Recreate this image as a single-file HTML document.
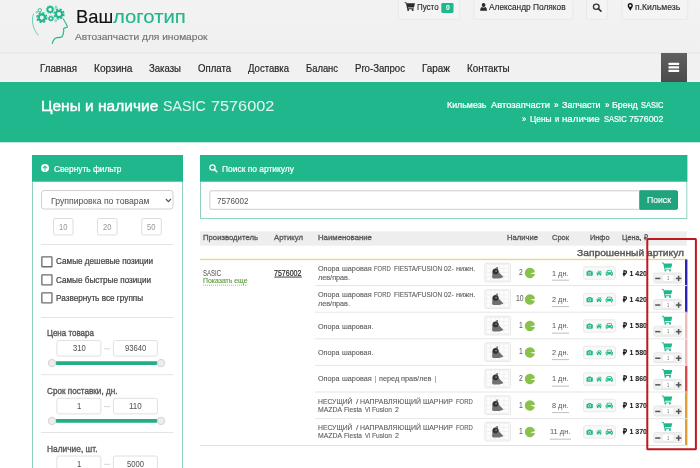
<!DOCTYPE html>
<html lang="ru"><head><meta charset="utf-8"><title>Цены и наличие SASIC 7576002</title>
<style>
html,body{margin:0;padding:0;background:#fff}
body{width:700px;height:468px;overflow:hidden;position:relative;font-family:"Liberation Sans",sans-serif}
#p{position:absolute;left:-6px;top:-6px;width:712px;height:480px;overflow:hidden;background:#fff;}
#p svg{position:absolute;left:0;top:0}
#t{position:absolute;left:6px;top:6px;width:700px;height:468px;will-change:transform}
#t span{position:absolute;line-height:0;white-space:pre;transform-origin:0 0}
</style></head><body><div id="p">
<svg width="712" height="480" viewBox="-6 -6 712 480">
<defs><linearGradient id="hg" x1="0" y1="0" x2="0" y2="1"><stop offset="0" stop-color="#f3f3f3"/><stop offset="1" stop-color="#f0f0f0"/></linearGradient><linearGradient id="bg" x1="0" y1="0" x2="0" y2="1"><stop offset="0" stop-color="#606060"/><stop offset="1" stop-color="#4a4a4a"/></linearGradient></defs>
<rect x="-6.00" y="-6.00" width="712.00" height="59.00" rx="0" fill="url(#hg)" />
<rect x="-6.00" y="53.00" width="712.00" height="29.00" rx="0" fill="#f1f1f1" />
<rect x="-6.00" y="52.30" width="712.00" height="1.40" rx="0" fill="#e7e7e7" />
<g fill="none" stroke="#21b78c"><path d="M33.6 13.6C32 17.5 32 22 33.6 27c1 3.2 2.8 6 4.8 8.4" stroke-width="0.8" opacity="0.8"/><path d="M63.3 18.6c0.6 1.6 1.4 3 2.4 4.4l1.5 3.2c0.3 0.7 0 1.1-0.7 1.3l-2.2 0.6c-0.7 0.3-0.9 0.8-0.7 1.5l0.2 1.6-0.6 1.2 0.3 1.4-0.8 1.3c-0.2 1.4-0.9 2.2-2.3 2.3l-3.4 0.2c-2.4 0.5-4 2.6-4.8 6.2" stroke-width="1.1" stroke-linejoin="round"/><circle cx="41.8" cy="17.6" r="3.2" stroke-width="2.3"/><circle cx="41.8" cy="17.6" r="4.9" stroke-width="1.5" stroke-dasharray="2.155 1.693"/><circle cx="50.1" cy="9.5" r="2.6" stroke-width="1.7"/><circle cx="50.1" cy="9.5" r="3.8" stroke-width="0.9" stroke-dasharray="1.337 1.051"/><circle cx="59" cy="14" r="3.2" stroke-width="2.3"/><circle cx="59" cy="14" r="4.9" stroke-width="1.5" stroke-dasharray="2.155 1.693"/><circle cx="50.9" cy="18.4" r="1.8" stroke-width="1.4"/><circle cx="50.9" cy="18.4" r="2.7" stroke-width="0.8" stroke-dasharray="1.188 0.933"/><circle cx="39.8" cy="10.2" r="1.7" stroke-width="0.9"/><circle cx="36.8" cy="12.3" r="0.8" stroke-width="0.6"/><circle cx="56" cy="7.2" r="1.1" stroke-width="0.6"/><circle cx="55.7" cy="20.6" r="0.9" stroke-width="0.6"/></g>
<rect x="398.30" y="-2.50" width="61.30" height="21.80" rx="1" fill="#f4f4f4" stroke="#e9e9e9" stroke-width="1" />
<rect x="473.80" y="-2.50" width="99.10" height="21.80" rx="1" fill="#f4f4f4" stroke="#e9e9e9" stroke-width="1" />
<rect x="586.50" y="-2.50" width="20.90" height="21.80" rx="1" fill="#f4f4f4" stroke="#e9e9e9" stroke-width="1" />
<rect x="622.00" y="-2.50" width="65.70" height="21.80" rx="1" fill="#f4f4f4" stroke="#e9e9e9" stroke-width="1" />
<g transform="translate(404.70 1.90) scale(0.6438 0.6571)" fill="#2a2a2a"><path d="M0 0.6h2.6l0.6 1.6H16l-1.6 6.2H5l0.3 1.4h8.6v1.4H4L2 2H0z"/><circle cx="5.4" cy="12.4" r="1.5"/><circle cx="12.4" cy="12.4" r="1.5"/></g>
<rect x="441.30" y="2.90" width="12.20" height="10.00" rx="1.3" fill="#21b78c" />
<g transform="translate(480.00 3.00) scale(0.6000 0.6417)" fill="#2a2a2a"><circle cx="6" cy="3.1" r="3.1"/><path d="M0.3 12c0-3.6 1.6-5.4 3.2-5.7 0.7 0.6 1.5 0.9 2.5 0.9s1.8-0.3 2.5-0.9c1.6 0.3 3.2 2.1 3.2 5.7z"/></g>
<g transform="translate(592.50 3.30) scale(0.7667 0.7083)" fill="#333"><circle cx="4.9" cy="4.9" r="3.7" fill="none" stroke="#333" stroke-width="1.7"/><path d="M7.4 7.4L11 11" stroke="#333" stroke-width="2.2" stroke-linecap="round"/></g>
<g transform="translate(627.70 3.10) scale(0.6375 0.6333)" fill="#111"><path fill-rule="evenodd" d="M4 0a4 4 0 0 1 4 4c0 1-0.4 1.8-0.9 2.8L4 12 0.9 6.8C0.4 5.8 0 5 0 4a4 4 0 0 1 4-4zm0 2.1a1.9 1.9 0 1 0 0 3.8 1.9 1.9 0 0 0 0-3.8z"/></g>
<rect x="661.00" y="53.00" width="26.00" height="29.00" rx="0" fill="url(#bg)" />
<rect x="668.50" y="62.80" width="10.60" height="2.10" rx="0.5" fill="#fff" />
<rect x="668.50" y="66.30" width="10.60" height="2.10" rx="0.5" fill="#fff" />
<rect x="668.50" y="69.80" width="10.60" height="2.10" rx="0.5" fill="#fff" />
<rect x="-6.00" y="82.00" width="712.00" height="60.30" rx="0" fill="#21b78c" />
<rect x="32.50" y="155.50" width="150.00" height="329.00" rx="0" fill="#fff" stroke="#8fd2c0" stroke-width="1" />
<rect x="32.00" y="155.00" width="151.00" height="26.70" rx="0" fill="#21b78c" />
<g transform="translate(41.00 164.00) scale(0.6667 0.6667)" fill="#fff"><path fill-rule="evenodd" d="M6 0a6 6 0 1 1 0 12A6 6 0 0 1 6 0zm0 2.2L2.2 6l0.9 0.9 2.2-2.1V9.8h1.4V4.8l2.2 2.1L9.8 6z"/></g>
<rect x="41.50" y="190.50" width="131.50" height="18.50" rx="2.5" fill="#fff" stroke="#d0d0d0" stroke-width="1" />
<path d="M165.9 199L168.4 201.6 170.9 199" fill="none" stroke="#505050" stroke-width="1.1"/>
<rect x="53.50" y="218.50" width="19.50" height="16.50" rx="1.5" fill="#fff" stroke="#ddd" stroke-width="1" />
<rect x="97.50" y="218.50" width="19.50" height="16.50" rx="1.5" fill="#fff" stroke="#ddd" stroke-width="1" />
<rect x="141.80" y="218.50" width="19.50" height="16.50" rx="1.5" fill="#fff" stroke="#ddd" stroke-width="1" />
<rect x="41.00" y="244.00" width="132.50" height="1.00" rx="0" fill="#e4e4e4" />
<rect x="41.85" y="256.85" width="10.10" height="9.90" rx="0.35" fill="#fff" stroke="#6c6c6c" stroke-width="1.3" />
<rect x="41.85" y="274.95" width="10.10" height="9.90" rx="0.35" fill="#fff" stroke="#6c6c6c" stroke-width="1.3" />
<rect x="41.85" y="292.95" width="10.10" height="9.90" rx="0.35" fill="#fff" stroke="#6c6c6c" stroke-width="1.3" />
<rect x="41.00" y="317.00" width="132.50" height="1.00" rx="0" fill="#e4e4e4" />
<rect x="56.90" y="340.50" width="44.00" height="15.60" rx="2" fill="#fff" stroke="#e0e0e0" stroke-width="1" />
<rect x="113.40" y="340.50" width="44.00" height="15.60" rx="2" fill="#fff" stroke="#e0e0e0" stroke-width="1" />
<rect x="104.00" y="348.30" width="6.00" height="1.00" rx="0" fill="#d6d6d6" />
<rect x="55.00" y="361.30" width="103.00" height="3.60" rx="1.8" fill="#23ae86" />
<circle cx="52" cy="363.1" r="3.7" fill="#ededed" stroke="#d4d4d4" stroke-width="1"/>
<circle cx="161" cy="363.1" r="3.7" fill="#ededed" stroke="#d4d4d4" stroke-width="1"/>
<rect x="41.00" y="374.20" width="132.50" height="1.00" rx="0" fill="#e4e4e4" />
<rect x="56.90" y="398.30" width="44.00" height="15.60" rx="2" fill="#fff" stroke="#e0e0e0" stroke-width="1" />
<rect x="113.40" y="398.30" width="44.00" height="15.60" rx="2" fill="#fff" stroke="#e0e0e0" stroke-width="1" />
<rect x="104.00" y="406.10" width="6.00" height="1.00" rx="0" fill="#d6d6d6" />
<rect x="55.00" y="419.10" width="103.00" height="3.60" rx="1.8" fill="#23ae86" />
<circle cx="52" cy="420.9" r="3.7" fill="#ededed" stroke="#d4d4d4" stroke-width="1"/>
<circle cx="161" cy="420.9" r="3.7" fill="#ededed" stroke="#d4d4d4" stroke-width="1"/>
<rect x="41.00" y="432.00" width="132.50" height="1.00" rx="0" fill="#e4e4e4" />
<rect x="56.90" y="456.00" width="44.00" height="15.60" rx="2" fill="#fff" stroke="#e0e0e0" stroke-width="1" />
<rect x="113.40" y="456.00" width="44.00" height="15.60" rx="2" fill="#fff" stroke="#e0e0e0" stroke-width="1" />
<rect x="104.00" y="463.80" width="6.00" height="1.00" rx="0" fill="#d6d6d6" />
<rect x="55.00" y="476.80" width="103.00" height="3.60" rx="1.8" fill="#23ae86" />
<circle cx="52" cy="478.6" r="3.7" fill="#ededed" stroke="#d4d4d4" stroke-width="1"/>
<circle cx="161" cy="478.6" r="3.7" fill="#ededed" stroke="#d4d4d4" stroke-width="1"/>
<rect x="200.50" y="155.50" width="486.30" height="63.00" rx="0" fill="#fff" stroke="#8fd2c0" stroke-width="1" />
<rect x="200.00" y="155.00" width="487.30" height="26.70" rx="0" fill="#21b78c" />
<g transform="translate(209.00 164.00) scale(0.7083 0.7083)" fill="#fff"><circle cx="4.9" cy="4.9" r="3.7" fill="none" stroke="#fff" stroke-width="1.7"/><path d="M7.4 7.4L11 11" stroke="#fff" stroke-width="2.2" stroke-linecap="round"/></g>
<rect x="209.80" y="190.80" width="430.00" height="18.50" rx="1" fill="#fff" stroke="#cdcdcd" stroke-width="1" />
<rect x="640.00" y="190.80" width="37.50" height="18.50" rx="1.1" fill="#1fa47e" stroke="#1c9c78" stroke-width="1" />
<rect x="639.50" y="190.30" width="3.00" height="19.50" rx="0" fill="#1fa47e" />
<rect x="200.00" y="231.30" width="486.80" height="14.40" rx="0" fill="#eeeeee" />
<rect x="200.00" y="257.60" width="487.00" height="1.40" rx="0" fill="#fffbe4" />
<rect x="200.00" y="258.95" width="487.00" height="1.15" rx="0" fill="#dbd2b4" />
<path d="M203 285.2H247.5" stroke="#86b96a" stroke-width="0.9" stroke-dasharray="1 1" fill="none"/>
<rect x="274.30" y="276.60" width="27.50" height="0.90" rx="0" fill="#2a2a2a" />
<g transform="translate(484.40 262.80)"><rect x="0.5" y="0.5" width="25.5" height="18.6" rx="1" fill="#fbfbfb" stroke="#e7e7e7"/><rect x="2" y="1.6" width="22" height="16.2" fill="#fdfdfd" stroke="#e9e9e9" stroke-width="0.5"/><path d="M2 5.6h22M2 9.7h22M2 13.8h22M6.4 1.6v16.2M10.8 1.6v16.2M15.2 1.6v16.2M19.6 1.6v16.2" stroke="#e9e9e9" stroke-width="0.6" fill="none"/><path d="M11.9 4.2h1.7v2h-1.7z" fill="#777"/><path d="M8 8.6a3.2 3.2 0 0 1 6.3-0.6l0.4 1.7 3.9 4.1c0.4 0.5 0.2 0.9-0.4 1l-3.3 0.8H9.2c-0.9 0-1.5-0.6-1.5-1.5z" fill="#707070"/><circle cx="11.1" cy="8.7" r="2.8" fill="#333"/><circle cx="11.7" cy="8.3" r="0.9" fill="#8c8c8c"/></g>
<path transform="translate(524.80 267.80) scale(1.04)" d="M5 5.2L9.9 4.2A5 5 0 1 0 9.8 6.3z" fill="#88c24b"/>
<rect x="551.75" y="279.70" width="17.30" height="0.90" rx="0" fill="#b8b8b8" />
<rect x="583.60" y="266.80" width="31.70" height="12.40" rx="1.5" fill="#f8f8f8" stroke="#eaeaea" stroke-width="1" />
<g transform="translate(586.50 270.30) scale(0.4500 0.4667)" fill="#21b78c"><path fill-rule="evenodd" d="M4.6 0.6h4.8l0.9 1.6h2.3c0.8 0 1.4 0.6 1.4 1.4v6.6c0 0.8-0.6 1.4-1.4 1.4H1.4C0.6 11.6 0 11 0 10.2V3.6c0-0.8 0.6-1.4 1.4-1.4h2.3zM7 3.7a3 3 0 1 0 0 6 3 3 0 0 0 0-6zm0 1.2a1.8 1.8 0 1 1 0 3.6 1.8 1.8 0 0 1 0-3.6z"/></g>
<g transform="translate(595.80 270.20) scale(0.4571 0.4750)" fill="#21b78c"><path d="M7 0.6L0.2 6.2l0.8 0.9L7 2.2l6 4.9 0.8-0.9-2.2-1.8V1.4h-1.6v1.7z"/><path d="M7 3.4L2.2 7.3v4.1h3.4V8.4h2.8v3h3.4V7.3z"/></g>
<g transform="translate(605.40 270.20) scale(0.4875 0.4917)" fill="#21b78c"><path fill-rule="evenodd" d="M3.2 1.2C3.5 0.5 4 0.2 4.7 0.2h6.6c0.7 0 1.2 0.3 1.5 1l1.2 3.1c0.9 0.2 1.6 0.9 1.6 1.9v3.2h-1.3v1.2c0 0.7-0.5 1.2-1.2 1.2s-1.2-0.5-1.2-1.2V9.4H4.1v1.2c0 0.7-0.5 1.2-1.2 1.2s-1.2-0.5-1.2-1.2V9.4H0.4V6.2c0-1 0.7-1.7 1.6-1.9zM4.9 1.7L3.8 4.2h8.4l-1.1-2.5zM3 5.6a1.2 1.2 0 1 0 0 2.4 1.2 1.2 0 0 0 0-2.4zm10 0a1.2 1.2 0 1 0 0 2.4 1.2 1.2 0 0 0 0-2.4z"/></g>
<g transform="translate(661.90 262.10) scale(0.6500 0.6714)" fill="#21b78c"><path d="M0 0.6h2.6l0.6 1.6H16l-1.6 6.2H5l0.3 1.4h8.6v1.4H4L2 2H0z"/><circle cx="5.4" cy="12.4" r="1.5"/><circle cx="12.4" cy="12.4" r="1.5"/></g>
<rect x="653.90" y="273.00" width="27.60" height="10.00" rx="1.5" fill="#f2f2f2" stroke="#e6e6e6" stroke-width="1" />
<rect x="662.10" y="274.30" width="12.00" height="7.40" rx="1" fill="#fff" stroke="#e6e6e6" stroke-width="1" />
<rect x="655.20" y="277.70" width="5.20" height="1.50" rx="0" fill="#555" />
<rect x="675.90" y="277.70" width="5.40" height="1.50" rx="0" fill="#555" />
<rect x="677.85" y="275.75" width="1.50" height="5.40" rx="0" fill="#555" />
<rect x="685.00" y="259.50" width="2.40" height="26.60" rx="0" fill="#2a23b6" />
<rect x="315.00" y="285.10" width="372.00" height="1.00" rx="0" fill="#e6e6e6" />
<g transform="translate(484.40 289.30)"><rect x="0.5" y="0.5" width="25.5" height="18.6" rx="1" fill="#fbfbfb" stroke="#e7e7e7"/><rect x="2" y="1.6" width="22" height="16.2" fill="#fdfdfd" stroke="#e9e9e9" stroke-width="0.5"/><path d="M2 5.6h22M2 9.7h22M2 13.8h22M6.4 1.6v16.2M10.8 1.6v16.2M15.2 1.6v16.2M19.6 1.6v16.2" stroke="#e9e9e9" stroke-width="0.6" fill="none"/><path d="M11.9 4.2h1.7v2h-1.7z" fill="#777"/><path d="M8 8.6a3.2 3.2 0 0 1 6.3-0.6l0.4 1.7 3.9 4.1c0.4 0.5 0.2 0.9-0.4 1l-3.3 0.8H9.2c-0.9 0-1.5-0.6-1.5-1.5z" fill="#707070"/><circle cx="11.1" cy="8.7" r="2.8" fill="#333"/><circle cx="11.7" cy="8.3" r="0.9" fill="#8c8c8c"/></g>
<path transform="translate(524.80 294.30) scale(1.04)" d="M5 5.2L9.9 4.2A5 5 0 1 0 9.8 6.3z" fill="#88c24b"/>
<rect x="551.75" y="306.20" width="17.30" height="0.90" rx="0" fill="#b8b8b8" />
<rect x="583.60" y="293.30" width="31.70" height="12.40" rx="1.5" fill="#f8f8f8" stroke="#eaeaea" stroke-width="1" />
<g transform="translate(586.50 296.80) scale(0.4500 0.4667)" fill="#21b78c"><path fill-rule="evenodd" d="M4.6 0.6h4.8l0.9 1.6h2.3c0.8 0 1.4 0.6 1.4 1.4v6.6c0 0.8-0.6 1.4-1.4 1.4H1.4C0.6 11.6 0 11 0 10.2V3.6c0-0.8 0.6-1.4 1.4-1.4h2.3zM7 3.7a3 3 0 1 0 0 6 3 3 0 0 0 0-6zm0 1.2a1.8 1.8 0 1 1 0 3.6 1.8 1.8 0 0 1 0-3.6z"/></g>
<g transform="translate(595.80 296.70) scale(0.4571 0.4750)" fill="#21b78c"><path d="M7 0.6L0.2 6.2l0.8 0.9L7 2.2l6 4.9 0.8-0.9-2.2-1.8V1.4h-1.6v1.7z"/><path d="M7 3.4L2.2 7.3v4.1h3.4V8.4h2.8v3h3.4V7.3z"/></g>
<g transform="translate(605.40 296.70) scale(0.4875 0.4917)" fill="#21b78c"><path fill-rule="evenodd" d="M3.2 1.2C3.5 0.5 4 0.2 4.7 0.2h6.6c0.7 0 1.2 0.3 1.5 1l1.2 3.1c0.9 0.2 1.6 0.9 1.6 1.9v3.2h-1.3v1.2c0 0.7-0.5 1.2-1.2 1.2s-1.2-0.5-1.2-1.2V9.4H4.1v1.2c0 0.7-0.5 1.2-1.2 1.2s-1.2-0.5-1.2-1.2V9.4H0.4V6.2c0-1 0.7-1.7 1.6-1.9zM4.9 1.7L3.8 4.2h8.4l-1.1-2.5zM3 5.6a1.2 1.2 0 1 0 0 2.4 1.2 1.2 0 0 0 0-2.4zm10 0a1.2 1.2 0 1 0 0 2.4 1.2 1.2 0 0 0 0-2.4z"/></g>
<g transform="translate(661.90 288.70) scale(0.6500 0.6714)" fill="#21b78c"><path d="M0 0.6h2.6l0.6 1.6H16l-1.6 6.2H5l0.3 1.4h8.6v1.4H4L2 2H0z"/><circle cx="5.4" cy="12.4" r="1.5"/><circle cx="12.4" cy="12.4" r="1.5"/></g>
<rect x="653.90" y="299.60" width="27.60" height="10.00" rx="1.5" fill="#f2f2f2" stroke="#e6e6e6" stroke-width="1" />
<rect x="662.10" y="300.90" width="12.00" height="7.40" rx="1" fill="#fff" stroke="#e6e6e6" stroke-width="1" />
<rect x="655.20" y="304.30" width="5.20" height="1.50" rx="0" fill="#555" />
<rect x="675.90" y="304.30" width="5.40" height="1.50" rx="0" fill="#555" />
<rect x="677.85" y="302.35" width="1.50" height="5.40" rx="0" fill="#555" />
<rect x="685.00" y="286.10" width="2.40" height="26.60" rx="0" fill="#2a23b6" />
<rect x="315.00" y="311.70" width="372.00" height="1.00" rx="0" fill="#e6e6e6" />
<g transform="translate(484.40 315.80)"><rect x="0.5" y="0.5" width="25.5" height="18.6" rx="1" fill="#fbfbfb" stroke="#e7e7e7"/><rect x="2" y="1.6" width="22" height="16.2" fill="#fdfdfd" stroke="#e9e9e9" stroke-width="0.5"/><path d="M2 5.6h22M2 9.7h22M2 13.8h22M6.4 1.6v16.2M10.8 1.6v16.2M15.2 1.6v16.2M19.6 1.6v16.2" stroke="#e9e9e9" stroke-width="0.6" fill="none"/><path d="M11.9 4.2h1.7v2h-1.7z" fill="#777"/><path d="M8 8.6a3.2 3.2 0 0 1 6.3-0.6l0.4 1.7 3.9 4.1c0.4 0.5 0.2 0.9-0.4 1l-3.3 0.8H9.2c-0.9 0-1.5-0.6-1.5-1.5z" fill="#707070"/><circle cx="11.1" cy="8.7" r="2.8" fill="#333"/><circle cx="11.7" cy="8.3" r="0.9" fill="#8c8c8c"/></g>
<path transform="translate(524.80 320.80) scale(1.04)" d="M5 5.2L9.9 4.2A5 5 0 1 0 9.8 6.3z" fill="#88c24b"/>
<rect x="551.75" y="332.70" width="17.30" height="0.90" rx="0" fill="#b8b8b8" />
<rect x="583.60" y="319.80" width="31.70" height="12.40" rx="1.5" fill="#f8f8f8" stroke="#eaeaea" stroke-width="1" />
<g transform="translate(586.50 323.30) scale(0.4500 0.4667)" fill="#21b78c"><path fill-rule="evenodd" d="M4.6 0.6h4.8l0.9 1.6h2.3c0.8 0 1.4 0.6 1.4 1.4v6.6c0 0.8-0.6 1.4-1.4 1.4H1.4C0.6 11.6 0 11 0 10.2V3.6c0-0.8 0.6-1.4 1.4-1.4h2.3zM7 3.7a3 3 0 1 0 0 6 3 3 0 0 0 0-6zm0 1.2a1.8 1.8 0 1 1 0 3.6 1.8 1.8 0 0 1 0-3.6z"/></g>
<g transform="translate(595.80 323.20) scale(0.4571 0.4750)" fill="#21b78c"><path d="M7 0.6L0.2 6.2l0.8 0.9L7 2.2l6 4.9 0.8-0.9-2.2-1.8V1.4h-1.6v1.7z"/><path d="M7 3.4L2.2 7.3v4.1h3.4V8.4h2.8v3h3.4V7.3z"/></g>
<g transform="translate(605.40 323.20) scale(0.4875 0.4917)" fill="#21b78c"><path fill-rule="evenodd" d="M3.2 1.2C3.5 0.5 4 0.2 4.7 0.2h6.6c0.7 0 1.2 0.3 1.5 1l1.2 3.1c0.9 0.2 1.6 0.9 1.6 1.9v3.2h-1.3v1.2c0 0.7-0.5 1.2-1.2 1.2s-1.2-0.5-1.2-1.2V9.4H4.1v1.2c0 0.7-0.5 1.2-1.2 1.2s-1.2-0.5-1.2-1.2V9.4H0.4V6.2c0-1 0.7-1.7 1.6-1.9zM4.9 1.7L3.8 4.2h8.4l-1.1-2.5zM3 5.6a1.2 1.2 0 1 0 0 2.4 1.2 1.2 0 0 0 0-2.4zm10 0a1.2 1.2 0 1 0 0 2.4 1.2 1.2 0 0 0 0-2.4z"/></g>
<g transform="translate(661.90 315.30) scale(0.6500 0.6714)" fill="#21b78c"><path d="M0 0.6h2.6l0.6 1.6H16l-1.6 6.2H5l0.3 1.4h8.6v1.4H4L2 2H0z"/><circle cx="5.4" cy="12.4" r="1.5"/><circle cx="12.4" cy="12.4" r="1.5"/></g>
<rect x="653.90" y="326.20" width="27.60" height="10.00" rx="1.5" fill="#f2f2f2" stroke="#e6e6e6" stroke-width="1" />
<rect x="662.10" y="327.50" width="12.00" height="7.40" rx="1" fill="#fff" stroke="#e6e6e6" stroke-width="1" />
<rect x="655.20" y="330.90" width="5.20" height="1.50" rx="0" fill="#555" />
<rect x="675.90" y="330.90" width="5.40" height="1.50" rx="0" fill="#555" />
<rect x="677.85" y="328.95" width="1.50" height="5.40" rx="0" fill="#555" />
<rect x="685.00" y="312.70" width="2.40" height="26.60" rx="0" fill="#f2b9b9" />
<rect x="315.00" y="338.30" width="372.00" height="1.00" rx="0" fill="#e6e6e6" />
<g transform="translate(484.40 342.30)"><rect x="0.5" y="0.5" width="25.5" height="18.6" rx="1" fill="#fbfbfb" stroke="#e7e7e7"/><rect x="2" y="1.6" width="22" height="16.2" fill="#fdfdfd" stroke="#e9e9e9" stroke-width="0.5"/><path d="M2 5.6h22M2 9.7h22M2 13.8h22M6.4 1.6v16.2M10.8 1.6v16.2M15.2 1.6v16.2M19.6 1.6v16.2" stroke="#e9e9e9" stroke-width="0.6" fill="none"/><path d="M11.9 4.2h1.7v2h-1.7z" fill="#777"/><path d="M8 8.6a3.2 3.2 0 0 1 6.3-0.6l0.4 1.7 3.9 4.1c0.4 0.5 0.2 0.9-0.4 1l-3.3 0.8H9.2c-0.9 0-1.5-0.6-1.5-1.5z" fill="#707070"/><circle cx="11.1" cy="8.7" r="2.8" fill="#333"/><circle cx="11.7" cy="8.3" r="0.9" fill="#8c8c8c"/></g>
<path transform="translate(524.80 347.30) scale(1.04)" d="M5 5.2L9.9 4.2A5 5 0 1 0 9.8 6.3z" fill="#88c24b"/>
<rect x="551.75" y="359.20" width="17.30" height="0.90" rx="0" fill="#b8b8b8" />
<rect x="583.60" y="346.30" width="31.70" height="12.40" rx="1.5" fill="#f8f8f8" stroke="#eaeaea" stroke-width="1" />
<g transform="translate(586.50 349.80) scale(0.4500 0.4667)" fill="#21b78c"><path fill-rule="evenodd" d="M4.6 0.6h4.8l0.9 1.6h2.3c0.8 0 1.4 0.6 1.4 1.4v6.6c0 0.8-0.6 1.4-1.4 1.4H1.4C0.6 11.6 0 11 0 10.2V3.6c0-0.8 0.6-1.4 1.4-1.4h2.3zM7 3.7a3 3 0 1 0 0 6 3 3 0 0 0 0-6zm0 1.2a1.8 1.8 0 1 1 0 3.6 1.8 1.8 0 0 1 0-3.6z"/></g>
<g transform="translate(595.80 349.70) scale(0.4571 0.4750)" fill="#21b78c"><path d="M7 0.6L0.2 6.2l0.8 0.9L7 2.2l6 4.9 0.8-0.9-2.2-1.8V1.4h-1.6v1.7z"/><path d="M7 3.4L2.2 7.3v4.1h3.4V8.4h2.8v3h3.4V7.3z"/></g>
<g transform="translate(605.40 349.70) scale(0.4875 0.4917)" fill="#21b78c"><path fill-rule="evenodd" d="M3.2 1.2C3.5 0.5 4 0.2 4.7 0.2h6.6c0.7 0 1.2 0.3 1.5 1l1.2 3.1c0.9 0.2 1.6 0.9 1.6 1.9v3.2h-1.3v1.2c0 0.7-0.5 1.2-1.2 1.2s-1.2-0.5-1.2-1.2V9.4H4.1v1.2c0 0.7-0.5 1.2-1.2 1.2s-1.2-0.5-1.2-1.2V9.4H0.4V6.2c0-1 0.7-1.7 1.6-1.9zM4.9 1.7L3.8 4.2h8.4l-1.1-2.5zM3 5.6a1.2 1.2 0 1 0 0 2.4 1.2 1.2 0 0 0 0-2.4zm10 0a1.2 1.2 0 1 0 0 2.4 1.2 1.2 0 0 0 0-2.4z"/></g>
<g transform="translate(661.90 341.90) scale(0.6500 0.6714)" fill="#21b78c"><path d="M0 0.6h2.6l0.6 1.6H16l-1.6 6.2H5l0.3 1.4h8.6v1.4H4L2 2H0z"/><circle cx="5.4" cy="12.4" r="1.5"/><circle cx="12.4" cy="12.4" r="1.5"/></g>
<rect x="653.90" y="352.80" width="27.60" height="10.00" rx="1.5" fill="#f2f2f2" stroke="#e6e6e6" stroke-width="1" />
<rect x="662.10" y="354.10" width="12.00" height="7.40" rx="1" fill="#fff" stroke="#e6e6e6" stroke-width="1" />
<rect x="655.20" y="357.50" width="5.20" height="1.50" rx="0" fill="#555" />
<rect x="675.90" y="357.50" width="5.40" height="1.50" rx="0" fill="#555" />
<rect x="677.85" y="355.55" width="1.50" height="5.40" rx="0" fill="#555" />
<rect x="685.00" y="339.30" width="2.40" height="26.60" rx="0" fill="#f2b9b9" />
<rect x="315.00" y="364.90" width="372.00" height="1.00" rx="0" fill="#e6e6e6" />
<g transform="translate(484.40 368.80)"><rect x="0.5" y="0.5" width="25.5" height="18.6" rx="1" fill="#fbfbfb" stroke="#e7e7e7"/><rect x="2" y="1.6" width="22" height="16.2" fill="#fdfdfd" stroke="#e9e9e9" stroke-width="0.5"/><path d="M2 5.6h22M2 9.7h22M2 13.8h22M6.4 1.6v16.2M10.8 1.6v16.2M15.2 1.6v16.2M19.6 1.6v16.2" stroke="#e9e9e9" stroke-width="0.6" fill="none"/><path d="M11.9 4.2h1.7v2h-1.7z" fill="#777"/><path d="M8 8.6a3.2 3.2 0 0 1 6.3-0.6l0.4 1.7 3.9 4.1c0.4 0.5 0.2 0.9-0.4 1l-3.3 0.8H9.2c-0.9 0-1.5-0.6-1.5-1.5z" fill="#707070"/><circle cx="11.1" cy="8.7" r="2.8" fill="#333"/><circle cx="11.7" cy="8.3" r="0.9" fill="#8c8c8c"/></g>
<path transform="translate(524.80 373.80) scale(1.04)" d="M5 5.2L9.9 4.2A5 5 0 1 0 9.8 6.3z" fill="#88c24b"/>
<rect x="551.75" y="385.70" width="17.30" height="0.90" rx="0" fill="#b8b8b8" />
<rect x="583.60" y="372.80" width="31.70" height="12.40" rx="1.5" fill="#f8f8f8" stroke="#eaeaea" stroke-width="1" />
<g transform="translate(586.50 376.30) scale(0.4500 0.4667)" fill="#21b78c"><path fill-rule="evenodd" d="M4.6 0.6h4.8l0.9 1.6h2.3c0.8 0 1.4 0.6 1.4 1.4v6.6c0 0.8-0.6 1.4-1.4 1.4H1.4C0.6 11.6 0 11 0 10.2V3.6c0-0.8 0.6-1.4 1.4-1.4h2.3zM7 3.7a3 3 0 1 0 0 6 3 3 0 0 0 0-6zm0 1.2a1.8 1.8 0 1 1 0 3.6 1.8 1.8 0 0 1 0-3.6z"/></g>
<g transform="translate(595.80 376.20) scale(0.4571 0.4750)" fill="#21b78c"><path d="M7 0.6L0.2 6.2l0.8 0.9L7 2.2l6 4.9 0.8-0.9-2.2-1.8V1.4h-1.6v1.7z"/><path d="M7 3.4L2.2 7.3v4.1h3.4V8.4h2.8v3h3.4V7.3z"/></g>
<g transform="translate(605.40 376.20) scale(0.4875 0.4917)" fill="#21b78c"><path fill-rule="evenodd" d="M3.2 1.2C3.5 0.5 4 0.2 4.7 0.2h6.6c0.7 0 1.2 0.3 1.5 1l1.2 3.1c0.9 0.2 1.6 0.9 1.6 1.9v3.2h-1.3v1.2c0 0.7-0.5 1.2-1.2 1.2s-1.2-0.5-1.2-1.2V9.4H4.1v1.2c0 0.7-0.5 1.2-1.2 1.2s-1.2-0.5-1.2-1.2V9.4H0.4V6.2c0-1 0.7-1.7 1.6-1.9zM4.9 1.7L3.8 4.2h8.4l-1.1-2.5zM3 5.6a1.2 1.2 0 1 0 0 2.4 1.2 1.2 0 0 0 0-2.4zm10 0a1.2 1.2 0 1 0 0 2.4 1.2 1.2 0 0 0 0-2.4z"/></g>
<g transform="translate(661.90 368.50) scale(0.6500 0.6714)" fill="#21b78c"><path d="M0 0.6h2.6l0.6 1.6H16l-1.6 6.2H5l0.3 1.4h8.6v1.4H4L2 2H0z"/><circle cx="5.4" cy="12.4" r="1.5"/><circle cx="12.4" cy="12.4" r="1.5"/></g>
<rect x="653.90" y="379.40" width="27.60" height="10.00" rx="1.5" fill="#f2f2f2" stroke="#e6e6e6" stroke-width="1" />
<rect x="662.10" y="380.70" width="12.00" height="7.40" rx="1" fill="#fff" stroke="#e6e6e6" stroke-width="1" />
<rect x="655.20" y="384.10" width="5.20" height="1.50" rx="0" fill="#555" />
<rect x="675.90" y="384.10" width="5.40" height="1.50" rx="0" fill="#555" />
<rect x="677.85" y="382.15" width="1.50" height="5.40" rx="0" fill="#555" />
<rect x="685.00" y="365.90" width="2.40" height="26.60" rx="0" fill="#e0464a" />
<rect x="315.00" y="391.50" width="372.00" height="1.00" rx="0" fill="#e6e6e6" />
<g transform="translate(484.40 395.30)"><rect x="0.5" y="0.5" width="25.5" height="18.6" rx="1" fill="#fbfbfb" stroke="#e7e7e7"/><rect x="2" y="1.6" width="22" height="16.2" fill="#fdfdfd" stroke="#e9e9e9" stroke-width="0.5"/><path d="M2 5.6h22M2 9.7h22M2 13.8h22M6.4 1.6v16.2M10.8 1.6v16.2M15.2 1.6v16.2M19.6 1.6v16.2" stroke="#e9e9e9" stroke-width="0.6" fill="none"/><path d="M11.9 4.2h1.7v2h-1.7z" fill="#777"/><path d="M8 8.6a3.2 3.2 0 0 1 6.3-0.6l0.4 1.7 3.9 4.1c0.4 0.5 0.2 0.9-0.4 1l-3.3 0.8H9.2c-0.9 0-1.5-0.6-1.5-1.5z" fill="#707070"/><circle cx="11.1" cy="8.7" r="2.8" fill="#333"/><circle cx="11.7" cy="8.3" r="0.9" fill="#8c8c8c"/></g>
<path transform="translate(524.80 400.30) scale(1.04)" d="M5 5.2L9.9 4.2A5 5 0 1 0 9.8 6.3z" fill="#88c24b"/>
<rect x="551.75" y="412.20" width="17.30" height="0.90" rx="0" fill="#b8b8b8" />
<rect x="583.60" y="399.30" width="31.70" height="12.40" rx="1.5" fill="#f8f8f8" stroke="#eaeaea" stroke-width="1" />
<g transform="translate(586.50 402.80) scale(0.4500 0.4667)" fill="#21b78c"><path fill-rule="evenodd" d="M4.6 0.6h4.8l0.9 1.6h2.3c0.8 0 1.4 0.6 1.4 1.4v6.6c0 0.8-0.6 1.4-1.4 1.4H1.4C0.6 11.6 0 11 0 10.2V3.6c0-0.8 0.6-1.4 1.4-1.4h2.3zM7 3.7a3 3 0 1 0 0 6 3 3 0 0 0 0-6zm0 1.2a1.8 1.8 0 1 1 0 3.6 1.8 1.8 0 0 1 0-3.6z"/></g>
<g transform="translate(595.80 402.70) scale(0.4571 0.4750)" fill="#21b78c"><path d="M7 0.6L0.2 6.2l0.8 0.9L7 2.2l6 4.9 0.8-0.9-2.2-1.8V1.4h-1.6v1.7z"/><path d="M7 3.4L2.2 7.3v4.1h3.4V8.4h2.8v3h3.4V7.3z"/></g>
<g transform="translate(605.40 402.70) scale(0.4875 0.4917)" fill="#21b78c"><path fill-rule="evenodd" d="M3.2 1.2C3.5 0.5 4 0.2 4.7 0.2h6.6c0.7 0 1.2 0.3 1.5 1l1.2 3.1c0.9 0.2 1.6 0.9 1.6 1.9v3.2h-1.3v1.2c0 0.7-0.5 1.2-1.2 1.2s-1.2-0.5-1.2-1.2V9.4H4.1v1.2c0 0.7-0.5 1.2-1.2 1.2s-1.2-0.5-1.2-1.2V9.4H0.4V6.2c0-1 0.7-1.7 1.6-1.9zM4.9 1.7L3.8 4.2h8.4l-1.1-2.5zM3 5.6a1.2 1.2 0 1 0 0 2.4 1.2 1.2 0 0 0 0-2.4zm10 0a1.2 1.2 0 1 0 0 2.4 1.2 1.2 0 0 0 0-2.4z"/></g>
<g transform="translate(661.90 395.10) scale(0.6500 0.6714)" fill="#21b78c"><path d="M0 0.6h2.6l0.6 1.6H16l-1.6 6.2H5l0.3 1.4h8.6v1.4H4L2 2H0z"/><circle cx="5.4" cy="12.4" r="1.5"/><circle cx="12.4" cy="12.4" r="1.5"/></g>
<rect x="653.90" y="406.00" width="27.60" height="10.00" rx="1.5" fill="#f2f2f2" stroke="#e6e6e6" stroke-width="1" />
<rect x="662.10" y="407.30" width="12.00" height="7.40" rx="1" fill="#fff" stroke="#e6e6e6" stroke-width="1" />
<rect x="655.20" y="410.70" width="5.20" height="1.50" rx="0" fill="#555" />
<rect x="675.90" y="410.70" width="5.40" height="1.50" rx="0" fill="#555" />
<rect x="677.85" y="408.75" width="1.50" height="5.40" rx="0" fill="#555" />
<rect x="685.00" y="392.50" width="2.40" height="26.60" rx="0" fill="#e59d2e" />
<rect x="315.00" y="418.10" width="372.00" height="1.00" rx="0" fill="#e6e6e6" />
<g transform="translate(484.40 421.80)"><rect x="0.5" y="0.5" width="25.5" height="18.6" rx="1" fill="#fbfbfb" stroke="#e7e7e7"/><rect x="2" y="1.6" width="22" height="16.2" fill="#fdfdfd" stroke="#e9e9e9" stroke-width="0.5"/><path d="M2 5.6h22M2 9.7h22M2 13.8h22M6.4 1.6v16.2M10.8 1.6v16.2M15.2 1.6v16.2M19.6 1.6v16.2" stroke="#e9e9e9" stroke-width="0.6" fill="none"/><path d="M11.9 4.2h1.7v2h-1.7z" fill="#777"/><path d="M8 8.6a3.2 3.2 0 0 1 6.3-0.6l0.4 1.7 3.9 4.1c0.4 0.5 0.2 0.9-0.4 1l-3.3 0.8H9.2c-0.9 0-1.5-0.6-1.5-1.5z" fill="#707070"/><circle cx="11.1" cy="8.7" r="2.8" fill="#333"/><circle cx="11.7" cy="8.3" r="0.9" fill="#8c8c8c"/></g>
<path transform="translate(524.80 426.80) scale(1.04)" d="M5 5.2L9.9 4.2A5 5 0 1 0 9.8 6.3z" fill="#88c24b"/>
<rect x="549.75" y="438.70" width="21.30" height="0.90" rx="0" fill="#b8b8b8" />
<rect x="583.60" y="425.80" width="31.70" height="12.40" rx="1.5" fill="#f8f8f8" stroke="#eaeaea" stroke-width="1" />
<g transform="translate(586.50 429.30) scale(0.4500 0.4667)" fill="#21b78c"><path fill-rule="evenodd" d="M4.6 0.6h4.8l0.9 1.6h2.3c0.8 0 1.4 0.6 1.4 1.4v6.6c0 0.8-0.6 1.4-1.4 1.4H1.4C0.6 11.6 0 11 0 10.2V3.6c0-0.8 0.6-1.4 1.4-1.4h2.3zM7 3.7a3 3 0 1 0 0 6 3 3 0 0 0 0-6zm0 1.2a1.8 1.8 0 1 1 0 3.6 1.8 1.8 0 0 1 0-3.6z"/></g>
<g transform="translate(595.80 429.20) scale(0.4571 0.4750)" fill="#21b78c"><path d="M7 0.6L0.2 6.2l0.8 0.9L7 2.2l6 4.9 0.8-0.9-2.2-1.8V1.4h-1.6v1.7z"/><path d="M7 3.4L2.2 7.3v4.1h3.4V8.4h2.8v3h3.4V7.3z"/></g>
<g transform="translate(605.40 429.20) scale(0.4875 0.4917)" fill="#21b78c"><path fill-rule="evenodd" d="M3.2 1.2C3.5 0.5 4 0.2 4.7 0.2h6.6c0.7 0 1.2 0.3 1.5 1l1.2 3.1c0.9 0.2 1.6 0.9 1.6 1.9v3.2h-1.3v1.2c0 0.7-0.5 1.2-1.2 1.2s-1.2-0.5-1.2-1.2V9.4H4.1v1.2c0 0.7-0.5 1.2-1.2 1.2s-1.2-0.5-1.2-1.2V9.4H0.4V6.2c0-1 0.7-1.7 1.6-1.9zM4.9 1.7L3.8 4.2h8.4l-1.1-2.5zM3 5.6a1.2 1.2 0 1 0 0 2.4 1.2 1.2 0 0 0 0-2.4zm10 0a1.2 1.2 0 1 0 0 2.4 1.2 1.2 0 0 0 0-2.4z"/></g>
<g transform="translate(661.90 421.70) scale(0.6500 0.6714)" fill="#21b78c"><path d="M0 0.6h2.6l0.6 1.6H16l-1.6 6.2H5l0.3 1.4h8.6v1.4H4L2 2H0z"/><circle cx="5.4" cy="12.4" r="1.5"/><circle cx="12.4" cy="12.4" r="1.5"/></g>
<rect x="653.90" y="432.60" width="27.60" height="10.00" rx="1.5" fill="#f2f2f2" stroke="#e6e6e6" stroke-width="1" />
<rect x="662.10" y="433.90" width="12.00" height="7.40" rx="1" fill="#fff" stroke="#e6e6e6" stroke-width="1" />
<rect x="655.20" y="437.30" width="5.20" height="1.50" rx="0" fill="#555" />
<rect x="675.90" y="437.30" width="5.40" height="1.50" rx="0" fill="#555" />
<rect x="677.85" y="435.35" width="1.50" height="5.40" rx="0" fill="#555" />
<rect x="685.00" y="419.10" width="2.40" height="26.60" rx="0" fill="#e59d2e" />
<rect x="200.00" y="445.00" width="487.00" height="1.00" rx="0" fill="#e0e0e0" />
</svg>
<div id="t">
<span style="left:76.20px;top:17px;font-size:19px;color:#111;transform:scaleX(0.9661);-webkit-text-stroke:0.14px #111;">Ваш</span><span style="left:113.40px;top:17px;font-size:19px;color:#21b78c;transform:scaleX(1.0685);-webkit-text-stroke:0.14px #21b78c;">логотип</span>
<span style="left:75.30px;top:37px;font-size:9.7px;color:#707070;transform:scaleX(1.0488);-webkit-text-stroke:0.14px #707070;">Автозапчасти для иномарок</span>
<span style="left:417.20px;top:7px;font-size:8.8px;color:#2a2a2a;transform:scaleX(0.9054);-webkit-text-stroke:0.14px #2a2a2a;">Пусто</span>
<span style="left:445.50px;top:8px;font-size:7.4px;color:#fff;font-weight:700;transform:scaleX(0.9232);-webkit-text-stroke:0.04px #fff;">0</span>
<span style="left:489.40px;top:7px;font-size:8.8px;color:#2a2a2a;transform:scaleX(0.9466);-webkit-text-stroke:0.14px #2a2a2a;">Александр Поляков</span>
<span style="left:635.20px;top:7px;font-size:8.8px;color:#2a2a2a;transform:scaleX(0.9752);-webkit-text-stroke:0.14px #2a2a2a;">п.Кильмезь</span>
<span style="left:40.00px;top:68px;font-size:10.5px;color:#262626;transform:scaleX(0.9258);-webkit-text-stroke:0.19px #262626;">Главная</span>
<span style="left:94.00px;top:68px;font-size:10.5px;color:#262626;transform:scaleX(0.9625);-webkit-text-stroke:0.19px #262626;">Корзина</span>
<span style="left:149.00px;top:68px;font-size:10.5px;color:#262626;transform:scaleX(0.9119);-webkit-text-stroke:0.19px #262626;">Заказы</span>
<span style="left:198.00px;top:68px;font-size:10.5px;color:#262626;transform:scaleX(0.9135);-webkit-text-stroke:0.19px #262626;">Оплата</span>
<span style="left:248.00px;top:68px;font-size:10.5px;color:#262626;transform:scaleX(0.9091);-webkit-text-stroke:0.19px #262626;">Доставка</span>
<span style="left:306.00px;top:68px;font-size:10.5px;color:#262626;transform:scaleX(0.8951);-webkit-text-stroke:0.19px #262626;">Баланс</span>
<span style="left:355.00px;top:68px;font-size:10.5px;color:#262626;transform:scaleX(0.9152);-webkit-text-stroke:0.19px #262626;">Pro-Запрос</span>
<span style="left:421.50px;top:68px;font-size:10.5px;color:#262626;transform:scaleX(0.9445);-webkit-text-stroke:0.19px #262626;">Гараж</span>
<span style="left:466.50px;top:68px;font-size:10.5px;color:#262626;transform:scaleX(0.9369);-webkit-text-stroke:0.19px #262626;">Контакты</span>
<span style="left:41.00px;top:106px;font-size:15px;color:#fff;transform:scaleX(1.0332);-webkit-text-stroke:0.39px #fff;">Цены и наличие</span>
<span style="left:162.60px;top:106px;font-size:15px;color:#e1f5ee;transform:scaleX(0.9484);-webkit-text-stroke:0.04px #e1f5ee;">SASIC</span>
<span style="left:210.90px;top:106px;font-size:15px;color:#e1f5ee;transform:scaleX(1.0838);-webkit-text-stroke:0.04px #e1f5ee;">7576002</span>
<span style="left:446.90px;top:105px;font-size:9.7px;color:#fff;transform:scaleX(0.9134);-webkit-text-stroke:0.24px #fff;">Кильмезь</span>
<span style="left:491.40px;top:105px;font-size:9.7px;color:#fff;transform:scaleX(0.9626);-webkit-text-stroke:0.24px #fff;">Автозапчасти</span>
<span style="left:553.80px;top:105px;font-size:9.7px;color:#fff;transform:scaleX(0.8340);-webkit-text-stroke:0.24px #fff;">»</span>
<span style="left:562.40px;top:105px;font-size:9.7px;color:#fff;transform:scaleX(0.9285);-webkit-text-stroke:0.24px #fff;">Запчасти</span>
<span style="left:604.60px;top:105px;font-size:9.7px;color:#fff;transform:scaleX(0.8155);-webkit-text-stroke:0.24px #fff;">»</span>
<span style="left:612.40px;top:105px;font-size:9.7px;color:#fff;transform:scaleX(0.9157);-webkit-text-stroke:0.24px #fff;">Бренд</span>
<span style="left:641.20px;top:105px;font-size:9.7px;color:#fff;transform:scaleX(0.7694);-webkit-text-stroke:0.24px #fff;">SASIC</span>
<span style="left:521.60px;top:119px;font-size:9.7px;color:#fff;transform:scaleX(0.7599);-webkit-text-stroke:0.24px #fff;">»</span>
<span style="left:529.80px;top:119px;font-size:9.7px;color:#fff;transform:scaleX(0.8674);-webkit-text-stroke:0.24px #fff;">Цены</span>
<span style="left:554.80px;top:119px;font-size:9.7px;color:#fff;transform:scaleX(0.7741);-webkit-text-stroke:0.24px #fff;">и</span>
<span style="left:562.40px;top:119px;font-size:9.7px;color:#fff;transform:scaleX(0.9998);-webkit-text-stroke:0.24px #fff;">наличие</span>
<span style="left:603.50px;top:119px;font-size:9.7px;color:#fff;transform:scaleX(0.7797);-webkit-text-stroke:0.24px #fff;">SASIC</span>
<span style="left:629.20px;top:119px;font-size:9.7px;color:#fff;transform:scaleX(0.9108);-webkit-text-stroke:0.24px #fff;">7576002</span>
<span style="left:54.00px;top:169px;font-size:9.2px;color:#fff;transform:scaleX(0.9074);-webkit-text-stroke:0.19px #fff;">Свернуть фильтр</span>
<span style="left:51.00px;top:201px;font-size:9.1px;color:#555;transform:scaleX(0.9525);-webkit-text-stroke:0.04px #555;">Группировка по товарам</span>
<span style="left:59.00px;top:228px;font-size:8.2px;color:#999;transform:scaleX(0.9208);-webkit-text-stroke:0.04px #999;">10</span>
<span style="left:103.00px;top:228px;font-size:8.2px;color:#999;transform:scaleX(0.9208);-webkit-text-stroke:0.04px #999;">20</span>
<span style="left:147.30px;top:228px;font-size:8.2px;color:#999;transform:scaleX(0.9208);-webkit-text-stroke:0.04px #999;">50</span>
<span style="left:55.80px;top:261px;font-size:8.6px;color:#444;transform:scaleX(0.9493);-webkit-text-stroke:0.24px #444;">Самые дешевые позиции</span>
<span style="left:55.80px;top:280px;font-size:8.6px;color:#444;transform:scaleX(0.9475);-webkit-text-stroke:0.24px #444;">Самые быстрые позиции</span>
<span style="left:55.80px;top:298px;font-size:8.6px;color:#444;transform:scaleX(0.9525);-webkit-text-stroke:0.24px #444;">Развернуть все группы</span>
<span style="left:47.00px;top:333px;font-size:8.6px;color:#555;transform:scaleX(0.9302);-webkit-text-stroke:0.34px #555;">Цена товара</span>
<span style="left:72.62px;top:348px;font-size:8.6px;color:#555;transform:scaleX(0.8884);-webkit-text-stroke:0.04px #555;">310</span>
<span style="left:124.57px;top:348px;font-size:8.6px;color:#555;transform:scaleX(0.8884);-webkit-text-stroke:0.04px #555;">93640</span>
<span style="left:47.00px;top:391px;font-size:8.6px;color:#555;transform:scaleX(0.9479);-webkit-text-stroke:0.34px #555;">Срок поставки, дн.</span>
<span style="left:76.88px;top:406px;font-size:8.6px;color:#555;transform:scaleX(0.8884);-webkit-text-stroke:0.04px #555;">1</span>
<span style="left:128.82px;top:406px;font-size:8.6px;color:#555;transform:scaleX(0.9293);-webkit-text-stroke:0.04px #555;">110</span>
<span style="left:47.00px;top:449px;font-size:8.6px;color:#555;transform:scaleX(0.9724);-webkit-text-stroke:0.34px #555;">Наличие, шт.</span>
<span style="left:76.88px;top:464px;font-size:8.6px;color:#555;transform:scaleX(0.8884);-webkit-text-stroke:0.04px #555;">1</span>
<span style="left:126.70px;top:464px;font-size:8.6px;color:#555;transform:scaleX(0.8884);-webkit-text-stroke:0.04px #555;">5000</span>
<span style="left:222.00px;top:169px;font-size:9.2px;color:#fff;transform:scaleX(0.9162);-webkit-text-stroke:0.19px #fff;">Поиск по артикулу</span>
<span style="left:217.00px;top:201px;font-size:9.1px;color:#555;transform:scaleX(0.8890);-webkit-text-stroke:0.04px #555;">7576002</span>
<span style="left:646.60px;top:200px;font-size:9.7px;color:#fff;transform:scaleX(0.8926);-webkit-text-stroke:0.14px #fff;">Поиск</span>
<span style="left:203.00px;top:238px;font-size:7.9px;color:#555;transform:scaleX(0.9780);-webkit-text-stroke:0.29px #555;">Производитель</span>
<span style="left:274.00px;top:238px;font-size:7.9px;color:#555;transform:scaleX(0.9846);-webkit-text-stroke:0.29px #555;">Артикул</span>
<span style="left:318.00px;top:238px;font-size:7.9px;color:#555;transform:scaleX(0.9860);-webkit-text-stroke:0.29px #555;">Наименование</span>
<span style="left:507.00px;top:238px;font-size:7.9px;color:#555;transform:scaleX(0.9674);-webkit-text-stroke:0.29px #555;">Наличие</span>
<span style="left:552.00px;top:238px;font-size:7.9px;color:#555;transform:scaleX(0.9465);-webkit-text-stroke:0.29px #555;">Срок</span>
<span style="left:590.00px;top:238px;font-size:7.9px;color:#555;transform:scaleX(0.9315);-webkit-text-stroke:0.29px #555;">Инфо</span>
<span style="left:622.00px;top:238px;font-size:7.9px;color:#555;transform:scaleX(0.9242);-webkit-text-stroke:0.29px #555;">Цена, ₽</span>
<span style="left:577.00px;top:253px;font-size:9.7px;color:#5c5c5c;transform:scaleX(1.0576);-webkit-text-stroke:0.39px #555;">Запрошенный артикул</span>
<span style="left:203.00px;top:274px;font-size:8.2px;color:#555;transform:scaleX(0.7313);-webkit-text-stroke:0.04px #555;">SASIC</span>
<span style="left:203.00px;top:281px;font-size:7.5px;color:#5d9b3c;transform:scaleX(0.9195);-webkit-text-stroke:0.14px #5d9b3c;">Показать еще</span>
<span style="left:274.30px;top:273px;font-size:8.4px;color:#2a2a2a;transform:scaleX(0.8408);-webkit-text-stroke:0.19px #2a2a2a;">7576002</span>
<span style="left:318.00px;top:269px;font-size:7.5px;color:#5e5e5e;transform:scaleX(0.9635);-webkit-text-stroke:0.12px #5e5e5e;">Опора</span>
<span style="left:341.80px;top:269px;font-size:7.5px;color:#5e5e5e;transform:scaleX(0.9684);-webkit-text-stroke:0.12px #5e5e5e;">шаровая</span>
<span style="left:374.00px;top:269px;font-size:7.5px;color:#5e5e5e;transform:scaleX(0.7856);-webkit-text-stroke:0.12px #5e5e5e;">FORD</span>
<span style="left:393.90px;top:269px;font-size:7.5px;color:#5e5e5e;transform:scaleX(0.8571);-webkit-text-stroke:0.12px #5e5e5e;">FIESTA/FUSION</span>
<span style="left:444.20px;top:269px;font-size:7.5px;color:#5e5e5e;transform:scaleX(0.8948);-webkit-text-stroke:0.12px #5e5e5e;">02-</span>
<span style="left:456.20px;top:269px;font-size:7.5px;color:#5e5e5e;transform:scaleX(0.9856);-webkit-text-stroke:0.12px #5e5e5e;">нижн.</span>
<span style="left:318.00px;top:278px;font-size:7.5px;color:#5e5e5e;transform:scaleX(0.9669);-webkit-text-stroke:0.12px #5e5e5e;">лев/прав.</span>
<span style="left:519.30px;top:272px;font-size:8.6px;color:#606060;transform:scaleX(0.7944);-webkit-text-stroke:0.04px #606060;">2</span>
<span style="left:552.05px;top:274px;font-size:7.7px;color:#606060;transform:scaleX(0.9530);-webkit-text-stroke:0.04px #606060;">1 дн.</span>
<span style="left:622.60px;top:274px;font-size:7.8px;color:#1a1a1a;font-weight:700;transform:scaleX(0.8986);-webkit-text-stroke:0.04px #1a1a1a;">₽ 1 420</span>
<span style="left:667.10px;top:278px;font-size:5.6px;color:#777;transform:scaleX(0.7063);-webkit-text-stroke:0.04px #777;">1</span>
<span style="left:318.00px;top:295px;font-size:7.5px;color:#5e5e5e;transform:scaleX(0.9635);-webkit-text-stroke:0.12px #5e5e5e;">Опора</span>
<span style="left:341.80px;top:295px;font-size:7.5px;color:#5e5e5e;transform:scaleX(0.9684);-webkit-text-stroke:0.12px #5e5e5e;">шаровая</span>
<span style="left:374.00px;top:295px;font-size:7.5px;color:#5e5e5e;transform:scaleX(0.7856);-webkit-text-stroke:0.12px #5e5e5e;">FORD</span>
<span style="left:393.90px;top:295px;font-size:7.5px;color:#5e5e5e;transform:scaleX(0.8571);-webkit-text-stroke:0.12px #5e5e5e;">FIESTA/FUSION</span>
<span style="left:444.20px;top:295px;font-size:7.5px;color:#5e5e5e;transform:scaleX(0.8948);-webkit-text-stroke:0.12px #5e5e5e;">02-</span>
<span style="left:456.20px;top:295px;font-size:7.5px;color:#5e5e5e;transform:scaleX(0.9856);-webkit-text-stroke:0.12px #5e5e5e;">нижн.</span>
<span style="left:318.00px;top:304px;font-size:7.5px;color:#5e5e5e;transform:scaleX(0.9669);-webkit-text-stroke:0.12px #5e5e5e;">лев/прав.</span>
<span style="left:515.50px;top:298px;font-size:8.6px;color:#606060;transform:scaleX(0.7944);-webkit-text-stroke:0.04px #606060;">10</span>
<span style="left:552.05px;top:300px;font-size:7.7px;color:#606060;transform:scaleX(0.9530);-webkit-text-stroke:0.04px #606060;">2 дн.</span>
<span style="left:622.60px;top:300px;font-size:7.8px;color:#1a1a1a;font-weight:700;transform:scaleX(0.8986);-webkit-text-stroke:0.04px #1a1a1a;">₽ 1 420</span>
<span style="left:667.10px;top:305px;font-size:5.6px;color:#777;transform:scaleX(0.7063);-webkit-text-stroke:0.04px #777;">1</span>
<span style="left:318.00px;top:327px;font-size:7.5px;color:#5e5e5e;transform:scaleX(0.9635);-webkit-text-stroke:0.12px #5e5e5e;">Опора</span>
<span style="left:341.80px;top:327px;font-size:7.5px;color:#5e5e5e;transform:scaleX(0.9587);-webkit-text-stroke:0.12px #5e5e5e;">шаровая.</span>
<span style="left:519.30px;top:325px;font-size:8.6px;color:#606060;transform:scaleX(0.7944);-webkit-text-stroke:0.04px #606060;">1</span>
<span style="left:552.05px;top:326px;font-size:7.7px;color:#606060;transform:scaleX(0.9530);-webkit-text-stroke:0.04px #606060;">1 дн.</span>
<span style="left:622.60px;top:326px;font-size:7.8px;color:#1a1a1a;font-weight:700;transform:scaleX(0.8986);-webkit-text-stroke:0.04px #1a1a1a;">₽ 1 580</span>
<span style="left:667.10px;top:331px;font-size:5.6px;color:#777;transform:scaleX(0.7063);-webkit-text-stroke:0.04px #777;">1</span>
<span style="left:318.00px;top:353px;font-size:7.5px;color:#5e5e5e;transform:scaleX(0.9635);-webkit-text-stroke:0.12px #5e5e5e;">Опора</span>
<span style="left:341.80px;top:353px;font-size:7.5px;color:#5e5e5e;transform:scaleX(0.9587);-webkit-text-stroke:0.12px #5e5e5e;">шаровая.</span>
<span style="left:519.30px;top:351px;font-size:8.6px;color:#606060;transform:scaleX(0.7944);-webkit-text-stroke:0.04px #606060;">1</span>
<span style="left:552.05px;top:353px;font-size:7.7px;color:#606060;transform:scaleX(0.9530);-webkit-text-stroke:0.04px #606060;">2 дн.</span>
<span style="left:622.60px;top:353px;font-size:7.8px;color:#1a1a1a;font-weight:700;transform:scaleX(0.8986);-webkit-text-stroke:0.04px #1a1a1a;">₽ 1 580</span>
<span style="left:667.10px;top:358px;font-size:5.6px;color:#777;transform:scaleX(0.7063);-webkit-text-stroke:0.04px #777;">1</span>
<span style="left:318.00px;top:379px;font-size:7.5px;color:#5e5e5e;transform:scaleX(0.9635);-webkit-text-stroke:0.12px #5e5e5e;">Опора</span>
<span style="left:341.80px;top:379px;font-size:7.5px;color:#5e5e5e;transform:scaleX(0.9684);-webkit-text-stroke:0.12px #5e5e5e;">шаровая</span>
<span style="left:374.60px;top:379px;font-size:7.5px;color:#5e5e5e;transform:scaleX(0.6132);-webkit-text-stroke:0.12px #5e5e5e;">|</span>
<span style="left:379.10px;top:379px;font-size:7.5px;color:#5e5e5e;transform:scaleX(0.9717);-webkit-text-stroke:0.12px #5e5e5e;">перед</span>
<span style="left:401.30px;top:379px;font-size:7.5px;color:#5e5e5e;transform:scaleX(0.9836);-webkit-text-stroke:0.12px #5e5e5e;">прав/лев</span>
<span style="left:434.60px;top:379px;font-size:7.5px;color:#5e5e5e;transform:scaleX(0.6132);-webkit-text-stroke:0.12px #5e5e5e;">|</span>
<span style="left:519.30px;top:378px;font-size:8.6px;color:#606060;transform:scaleX(0.7944);-webkit-text-stroke:0.04px #606060;">2</span>
<span style="left:552.05px;top:379px;font-size:7.7px;color:#606060;transform:scaleX(0.9530);-webkit-text-stroke:0.04px #606060;">1 дн.</span>
<span style="left:622.60px;top:379px;font-size:7.8px;color:#1a1a1a;font-weight:700;transform:scaleX(0.8986);-webkit-text-stroke:0.04px #1a1a1a;">₽ 1 860</span>
<span style="left:667.10px;top:385px;font-size:5.6px;color:#777;transform:scaleX(0.7063);-webkit-text-stroke:0.04px #777;">1</span>
<span style="left:318.40px;top:402px;font-size:7.5px;color:#5e5e5e;transform:scaleX(0.9039);-webkit-text-stroke:0.12px #5e5e5e;">НЕСУЩИЙ</span>
<span style="left:355.70px;top:402px;font-size:7.5px;color:#5e5e5e;transform:scaleX(1.1026);-webkit-text-stroke:0.12px #5e5e5e;">/</span>
<span style="left:359.80px;top:402px;font-size:7.5px;color:#5e5e5e;transform:scaleX(0.9266);-webkit-text-stroke:0.12px #5e5e5e;">НАПРАВЛЯЮЩИЙ</span>
<span style="left:423.20px;top:402px;font-size:7.5px;color:#5e5e5e;transform:scaleX(0.9114);-webkit-text-stroke:0.12px #5e5e5e;">ШАРНИР</span>
<span style="left:455.60px;top:402px;font-size:7.5px;color:#5e5e5e;transform:scaleX(0.7903);-webkit-text-stroke:0.12px #5e5e5e;">FORD</span>
<span style="left:318.40px;top:410px;font-size:7.5px;color:#5e5e5e;transform:scaleX(0.9181);-webkit-text-stroke:0.12px #5e5e5e;">MAZDA</span>
<span style="left:344.10px;top:410px;font-size:7.5px;color:#5e5e5e;transform:scaleX(0.8812);-webkit-text-stroke:0.12px #5e5e5e;">Fiesta</span>
<span style="left:364.70px;top:410px;font-size:7.5px;color:#5e5e5e;transform:scaleX(0.7617);-webkit-text-stroke:0.12px #5e5e5e;">VI</span>
<span style="left:372.40px;top:410px;font-size:7.5px;color:#5e5e5e;transform:scaleX(0.8840);-webkit-text-stroke:0.12px #5e5e5e;">Fusion</span>
<span style="left:394.90px;top:410px;font-size:7.5px;color:#5e5e5e;transform:scaleX(0.9348);-webkit-text-stroke:0.12px #5e5e5e;">2</span>
<span style="left:519.30px;top:405px;font-size:8.6px;color:#606060;transform:scaleX(0.7944);-webkit-text-stroke:0.04px #606060;">1</span>
<span style="left:552.05px;top:406px;font-size:7.7px;color:#606060;transform:scaleX(0.9530);-webkit-text-stroke:0.04px #606060;">8 дн.</span>
<span style="left:622.60px;top:406px;font-size:7.8px;color:#1a1a1a;font-weight:700;transform:scaleX(0.8986);-webkit-text-stroke:0.04px #1a1a1a;">₽ 1 370</span>
<span style="left:667.10px;top:411px;font-size:5.6px;color:#777;transform:scaleX(0.7063);-webkit-text-stroke:0.04px #777;">1</span>
<span style="left:318.40px;top:428px;font-size:7.5px;color:#5e5e5e;transform:scaleX(0.9039);-webkit-text-stroke:0.12px #5e5e5e;">НЕСУЩИЙ</span>
<span style="left:355.70px;top:428px;font-size:7.5px;color:#5e5e5e;transform:scaleX(1.1026);-webkit-text-stroke:0.12px #5e5e5e;">/</span>
<span style="left:359.80px;top:428px;font-size:7.5px;color:#5e5e5e;transform:scaleX(0.9266);-webkit-text-stroke:0.12px #5e5e5e;">НАПРАВЛЯЮЩИЙ</span>
<span style="left:423.20px;top:428px;font-size:7.5px;color:#5e5e5e;transform:scaleX(0.9114);-webkit-text-stroke:0.12px #5e5e5e;">ШАРНИР</span>
<span style="left:455.60px;top:428px;font-size:7.5px;color:#5e5e5e;transform:scaleX(0.7903);-webkit-text-stroke:0.12px #5e5e5e;">FORD</span>
<span style="left:318.40px;top:436px;font-size:7.5px;color:#5e5e5e;transform:scaleX(0.9181);-webkit-text-stroke:0.12px #5e5e5e;">MAZDA</span>
<span style="left:344.10px;top:436px;font-size:7.5px;color:#5e5e5e;transform:scaleX(0.8812);-webkit-text-stroke:0.12px #5e5e5e;">Fiesta</span>
<span style="left:364.70px;top:436px;font-size:7.5px;color:#5e5e5e;transform:scaleX(0.7617);-webkit-text-stroke:0.12px #5e5e5e;">VI</span>
<span style="left:372.40px;top:436px;font-size:7.5px;color:#5e5e5e;transform:scaleX(0.8840);-webkit-text-stroke:0.12px #5e5e5e;">Fusion</span>
<span style="left:394.90px;top:436px;font-size:7.5px;color:#5e5e5e;transform:scaleX(0.9348);-webkit-text-stroke:0.12px #5e5e5e;">2</span>
<span style="left:519.30px;top:431px;font-size:8.6px;color:#606060;transform:scaleX(0.7944);-webkit-text-stroke:0.04px #606060;">1</span>
<span style="left:550.05px;top:432px;font-size:7.7px;color:#606060;transform:scaleX(0.9753);-webkit-text-stroke:0.04px #606060;">11 дн.</span>
<span style="left:622.60px;top:432px;font-size:7.8px;color:#1a1a1a;font-weight:700;transform:scaleX(0.8986);-webkit-text-stroke:0.04px #1a1a1a;">₽ 1 370</span>
<span style="left:667.10px;top:438px;font-size:5.6px;color:#777;transform:scaleX(0.7063);-webkit-text-stroke:0.04px #777;">1</span>

</div>
<svg width="712" height="480" viewBox="-6 -6 712 480">
<rect x="647.30" y="238.90" width="48.60" height="210.40" rx="0.5" fill="none" stroke="#bb191e" stroke-width="2" />
</svg>
</div></body></html>
